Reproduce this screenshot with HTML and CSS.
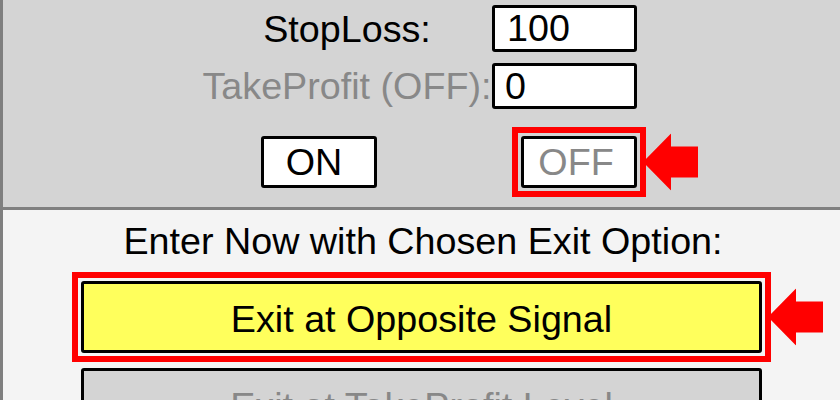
FILE: index.html
```html
<!DOCTYPE html>
<html>
<head>
<meta charset="utf-8">
<link rel="stylesheet" href="styles.css">
</head>
<body>
<div class="window">
  <section class="panel-top">
    <div class="fields">
      <label class="label">StopLoss:</label>
      <div class="input">100</div>
      <label class="label label-off">TakeProfit (OFF):</label>
      <div class="input">0</div>
    </div>
    <div class="toggle-row">
      <button class="btn btn-on">ON</button>
      <div class="highlight">
        <button class="btn btn-off">OFF</button>
        <svg class="arrow" width="55" height="57" viewBox="0 0 55 57"><polygon points="0,28.5 28,0 28,13 55,13 55,44 28,44 28,57" fill="#ff0000"/></svg>
      </div>
    </div>
  </section>
  <div class="divider"></div>
  <section class="panel-bottom">
    <div class="heading">Enter Now with Chosen Exit Option:</div>
    <div class="highlight highlight-wide">
      <button class="option option-active">Exit at Opposite Signal</button>
      <svg class="arrow" width="55" height="57" viewBox="0 0 55 57"><polygon points="0,28.5 28,0 28,13 55,13 55,44 28,44 28,57" fill="#ff0000"/></svg>
    </div>
    <button class="option option-disabled">Exit at TakeProfit Level</button>
  </section>
</div>
</body>
</html>
```
FILE: styles.css
```css
html, body {
  margin: 0;
  padding: 0;
  width: 840px;
  height: 400px;
  overflow: hidden;
  background: #f4f4f4;
}
body {
  font-family: "Liberation Sans", Arial, sans-serif;
  font-size: 37.7px;
  color: #000;
}
.window {
  border-left: 3px solid #7f7f7f;
  height: 400px;
  display: flex;
  flex-direction: column;
}
.panel-top {
  flex-shrink: 0;
  background: #d4d4d4;
  height: 207px;
  box-sizing: border-box;
  padding-top: 5px;
  display: flex;
  flex-direction: column;
}
.fields {
  display: grid;
  grid-template-columns: 290px 145px;
  row-gap: 11px;
  margin-left: 199px;
  align-items: center;
}
.label {
  text-align: center;
  line-height: 42px;
  white-space: nowrap;
}
.label-off {
  color: #888888;
}
.input {
  background: #fff;
  border: 3px solid #000;
  border-radius: 3px;
  height: 41px;
  box-sizing: content-box;
  padding-left: 12px;
  line-height: 41px;
}
.fields .input:nth-of-type(2) {
  height: 40px;
  line-height: 40px;
  padding-left: 10px;
}
.toggle-row {
  display: flex;
  align-items: center;
  margin-top: 18px;
  margin-left: 258px;
  gap: 135px;
}
.btn {
  font: inherit;
  width: 116px;
  height: 52px;
  background: #fff;
  border: 3px solid #000;
  border-radius: 3px;
  padding: 0;
  margin: 0;
  line-height: 44px;
}
.btn-on {
  color: #000;
  padding-right: 10px;
}
.btn-off {
  color: #888888;
  padding-right: 6px;
}
.highlight {
  position: relative;
  border: 6px solid #ff0000;
  padding: 3px;
  display: flex;
  flex-shrink: 0;
}
.arrow {
  position: absolute;
  left: calc(100% + 3px);
  top: 50%;
  transform: translateY(-50%);
  display: block;
}
.divider {
  flex-shrink: 0;
  height: 3px;
  background: #808080;
}
.panel-bottom {
  flex: 1;
  min-height: 0;
  overflow: hidden;
  background: #f4f4f4;
  padding-top: 10px;
  display: flex;
  flex-direction: column;
  align-items: center;
}
.heading {
  line-height: 42px;
  padding-left: 3px;
  white-space: nowrap;
  flex-shrink: 0;
}
.highlight-wide {
  margin-top: 10px;
}
.option {
  font: inherit;
  width: 681px;
  height: 72px;
  border: 3px solid #000;
  border-radius: 3px;
  margin: 0;
  padding: 4px 0 0 0;
  flex-shrink: 0;
}
.option-active {
  background: #ffff5c;
  color: #000;
}
.option-disabled {
  margin-top: 6px;
  background: #d4d4d4;
  color: #888888;
}
```
